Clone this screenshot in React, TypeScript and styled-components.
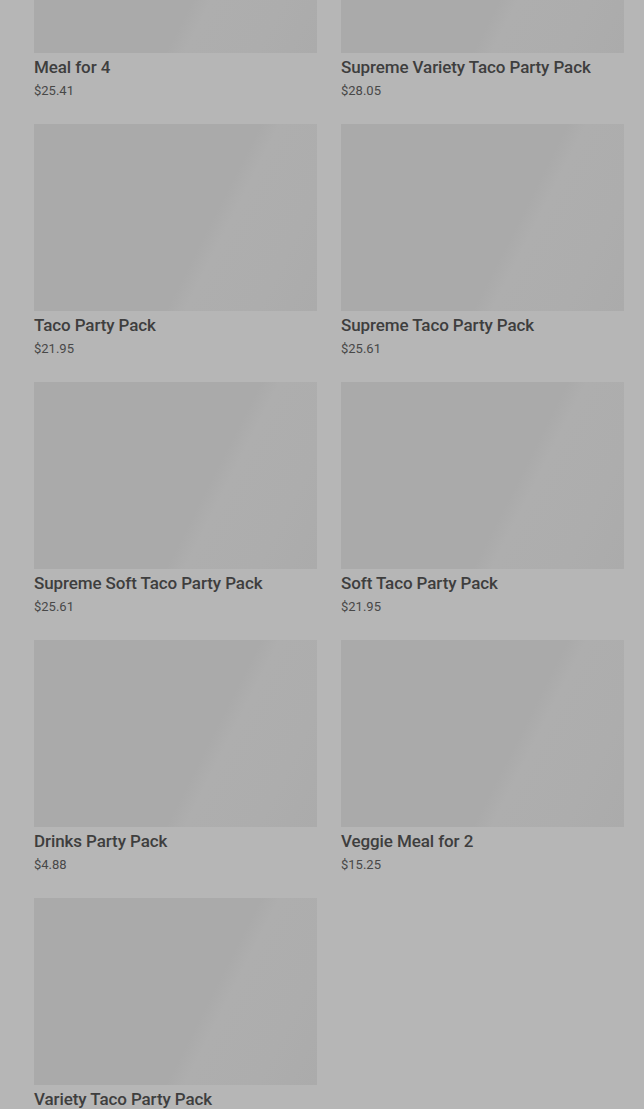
import React from 'react';
import styled, { createGlobalStyle } from 'styled-components';

const products = [
    { name: 'Meal for 4', price: '$25.41' },
    { name: 'Supreme Variety Taco Party Pack', price: '$28.05' },
    { name: 'Taco Party Pack', price: '$21.95' },
    { name: 'Supreme Taco Party Pack', price: '$25.61' },
    { name: 'Supreme Soft Taco Party Pack', price: '$25.61' },
    { name: 'Soft Taco Party Pack', price: '$21.95' },
    { name: 'Drinks Party Pack', price: '$4.88' },
    { name: 'Veggie Meal for 2', price: '$15.25' },
    { name: 'Variety Taco Party Pack', price: '$22.15' },
];

function App() {
    return (
        <>
            <GlobalStyle/>
            <Grid>
                {products.map((p) => (
                    <Card key={p.name}>
                        <Thumb/>
                        <Title>{p.name}</Title>
                        <Price>{p.price}</Price>
                    </Card>
                ))}
            </Grid>
        </>
    )
}

const GlobalStyle = createGlobalStyle`
    html, body {
        margin: 0;
        padding: 0;
        background-color: #b6b6b6;
        overflow: hidden;
    }
    body {
        font-family: Roboto, "Liberation Sans", sans-serif;
    }
`;

const Grid = styled.div`
    display: grid;
    grid-template-columns: 283px 283px;
    column-gap: 24px;
    row-gap: 22px;

    /* page is scrolled: first row starts above the viewport */
    margin-top: -134px;
    padding: 0 20px 0 34px;
`;

const Card = styled.div`
    display: flex;
    flex-direction: column;
`;

const Thumb = styled.div`
    height: 187px;

    background: linear-gradient(
        117deg,
        #aaaaaa 0%,
        #aaaaaa 60%,
        #aeaeae 65%,
        #adadad 84%,
        #ababab 100%
    );
`;

const Title = styled.div`
    margin-top: 3px;

    font-size: 17px;
    font-weight: 500;
    line-height: 22px;
    letter-spacing: -0.1px;
    color: #3e3e3e;
`;

const Price = styled.div`
    margin-top: 1px;

    font-size: 13px;
    font-weight: 400;
    line-height: 23px;
    color: #484848;
`;

export default App;
